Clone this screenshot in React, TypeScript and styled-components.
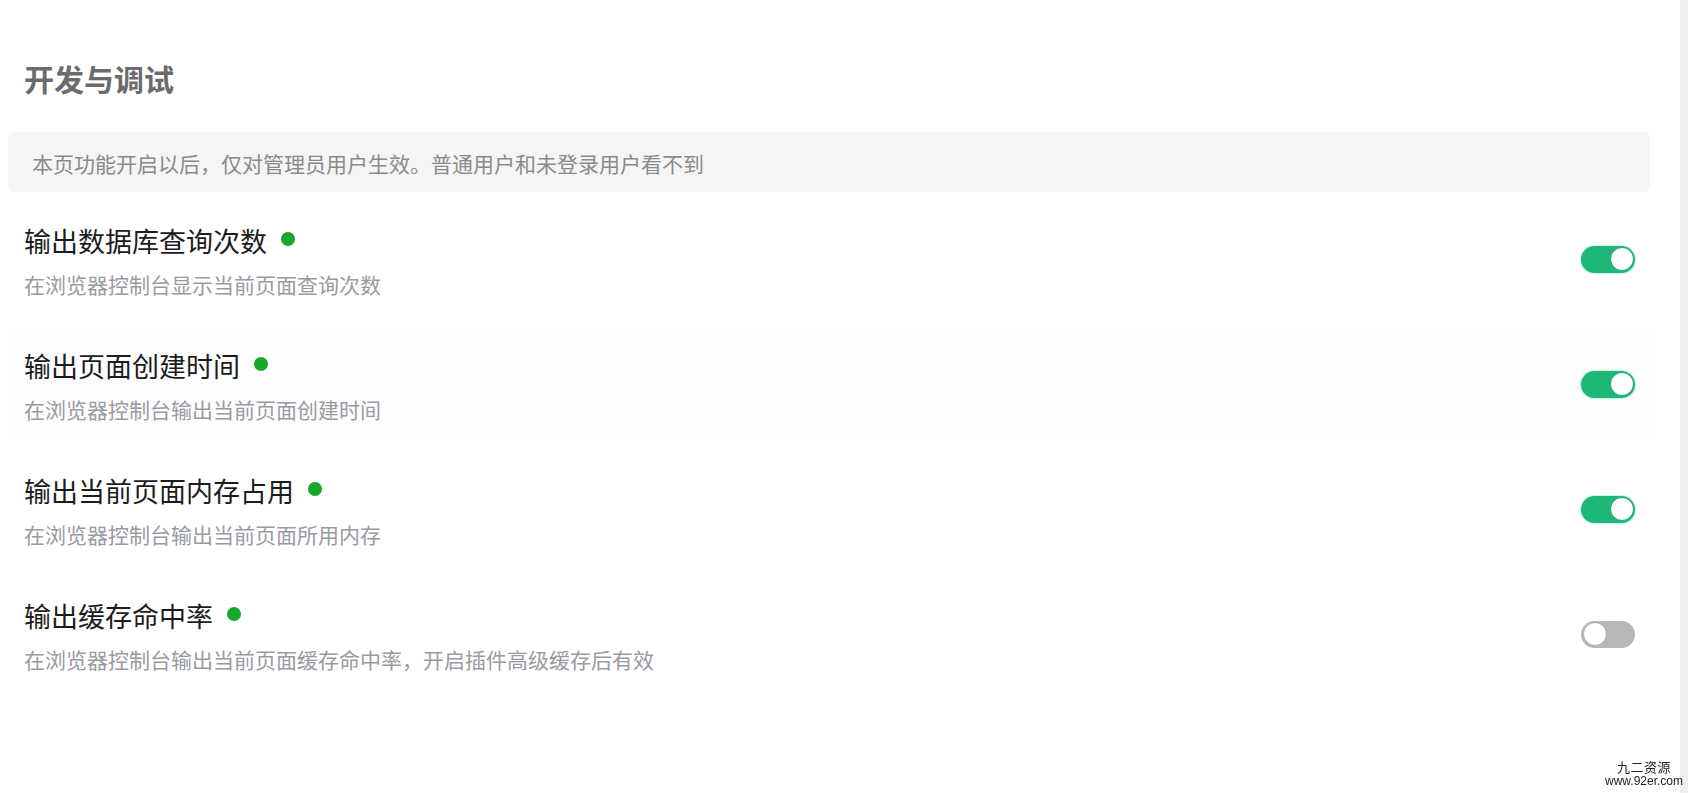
import React from "react";
import styled, { createGlobalStyle } from "styled-components";

const GlobalStyle = createGlobalStyle`
  html, body {
    margin: 0;
    padding: 0;
    background: #ffffff;
  }
  body {
    font-family: "Noto Sans CJK SC", "Noto Sans", sans-serif;
  }
  * { box-sizing: border-box; }
`;

const Page = styled.div`
  display: flex;
  min-height: 793px;
  background: #ffffff;
`;

const Main = styled.main`
  flex: 1;
  padding: 57px 30px 0 8px;
`;

const ScrollTrack = styled.div`
  width: 8px;
  background: #f0f0f0;
`;

const Heading = styled.h2`
  margin: 0;
  padding-left: 16px;
  font-size: 30px;
  line-height: 42px;
  font-weight: 700;
  color: #6b6b6b;
`;

const Notice = styled.div`
  margin-top: 33px;
  height: 60px;
  display: flex;
  align-items: center;
  padding: 2px 24px 0;
  background: #f5f5f5;
  border-radius: 6px;
  font-size: 21px;
  color: #8a8a8a;
`;

const List = styled.div`
  margin-top: 18px;
  display: flex;
  flex-direction: column;
  gap: 22px;
`;

const Row = styled.div<{ $highlighted?: boolean }>`
  display: flex;
  align-items: center;
  justify-content: space-between;
  padding: 13px 15px 17px 16px;
  background: ${(p) => (p.$highlighted ? "#fdfdfd" : "transparent")};
`;

const Info = styled.div`
  display: flex;
  flex-direction: column;
`;

const TitleLine = styled.div`
  display: flex;
  align-items: center;
  font-size: 27px;
  line-height: 36px;
  color: #1c1c1c;
`;

const Dot = styled.span`
  width: 14px;
  height: 14px;
  margin-left: 14px;
  margin-bottom: 4px;
  border-radius: 50%;
  background: #17a82e;
`;

const Desc = styled.div`
  margin-top: 13px;
  font-size: 21px;
  line-height: 24px;
  color: #9a9aa2;
`;

const Toggle = styled.div<{ $on: boolean }>`
  width: 54px;
  height: 27px;
  margin-bottom: 1px;
  border-radius: 14px;
  padding: 1.5px;
  display: flex;
  justify-content: ${(p) => (p.$on ? "flex-end" : "flex-start")};
  background: ${(p) => (p.$on ? "#1db877" : "#b7b7b7")};
  box-shadow: ${(p) => (p.$on ? "0 0 1px 1px rgba(80, 230, 160, 0.35)" : "none")};
`;

const Knob = styled.span<{ $on: boolean }>`
  width: 24px;
  height: 24px;
  border-radius: 50%;
  background: #ffffff;
  border: 1px solid ${(p) => (p.$on ? "#1aa86b" : "#a9a9a9")};
`;

const Watermark = styled.div`
  position: fixed;
  right: 5px;
  bottom: 5px;
  display: flex;
  flex-direction: column;
  align-items: center;
  color: #222222;
`;

const WatermarkName = styled.span`
  font-size: 13px;
  line-height: 15px;
  letter-spacing: 0.5px;
`;

const WatermarkUrl = styled.span`
  font-family: "Liberation Sans", Arial, sans-serif;
  font-size: 12px;
  line-height: 14px;
`;

const items = [
  { title: "输出数据库查询次数", desc: "在浏览器控制台显示当前页面查询次数", on: true },
  { title: "输出页面创建时间", desc: "在浏览器控制台输出当前页面创建时间", on: true, highlighted: true },
  { title: "输出当前页面内存占用", desc: "在浏览器控制台输出当前页面所用内存", on: true },
  { title: "输出缓存命中率", desc: "在浏览器控制台输出当前页面缓存命中率，开启插件高级缓存后有效", on: false },
];

export default function App() {
  return (
    <>
      <GlobalStyle />
      <Page>
        <Main>
          <Heading>开发与调试</Heading>
          <Notice>本页功能开启以后，仅对管理员用户生效。普通用户和未登录用户看不到</Notice>
          <List>
            {items.map((it) => (
              <Row key={it.title} $highlighted={it.highlighted}>
                <Info>
                  <TitleLine>
                    {it.title}
                    <Dot />
                  </TitleLine>
                  <Desc>{it.desc}</Desc>
                </Info>
                <Toggle $on={it.on}>
                  <Knob $on={it.on} />
                </Toggle>
              </Row>
            ))}
          </List>
        </Main>
        <ScrollTrack />
      </Page>
      <Watermark>
        <WatermarkName>九二资源</WatermarkName>
        <WatermarkUrl>www.92er.com</WatermarkUrl>
      </Watermark>
    </>
  );
}
